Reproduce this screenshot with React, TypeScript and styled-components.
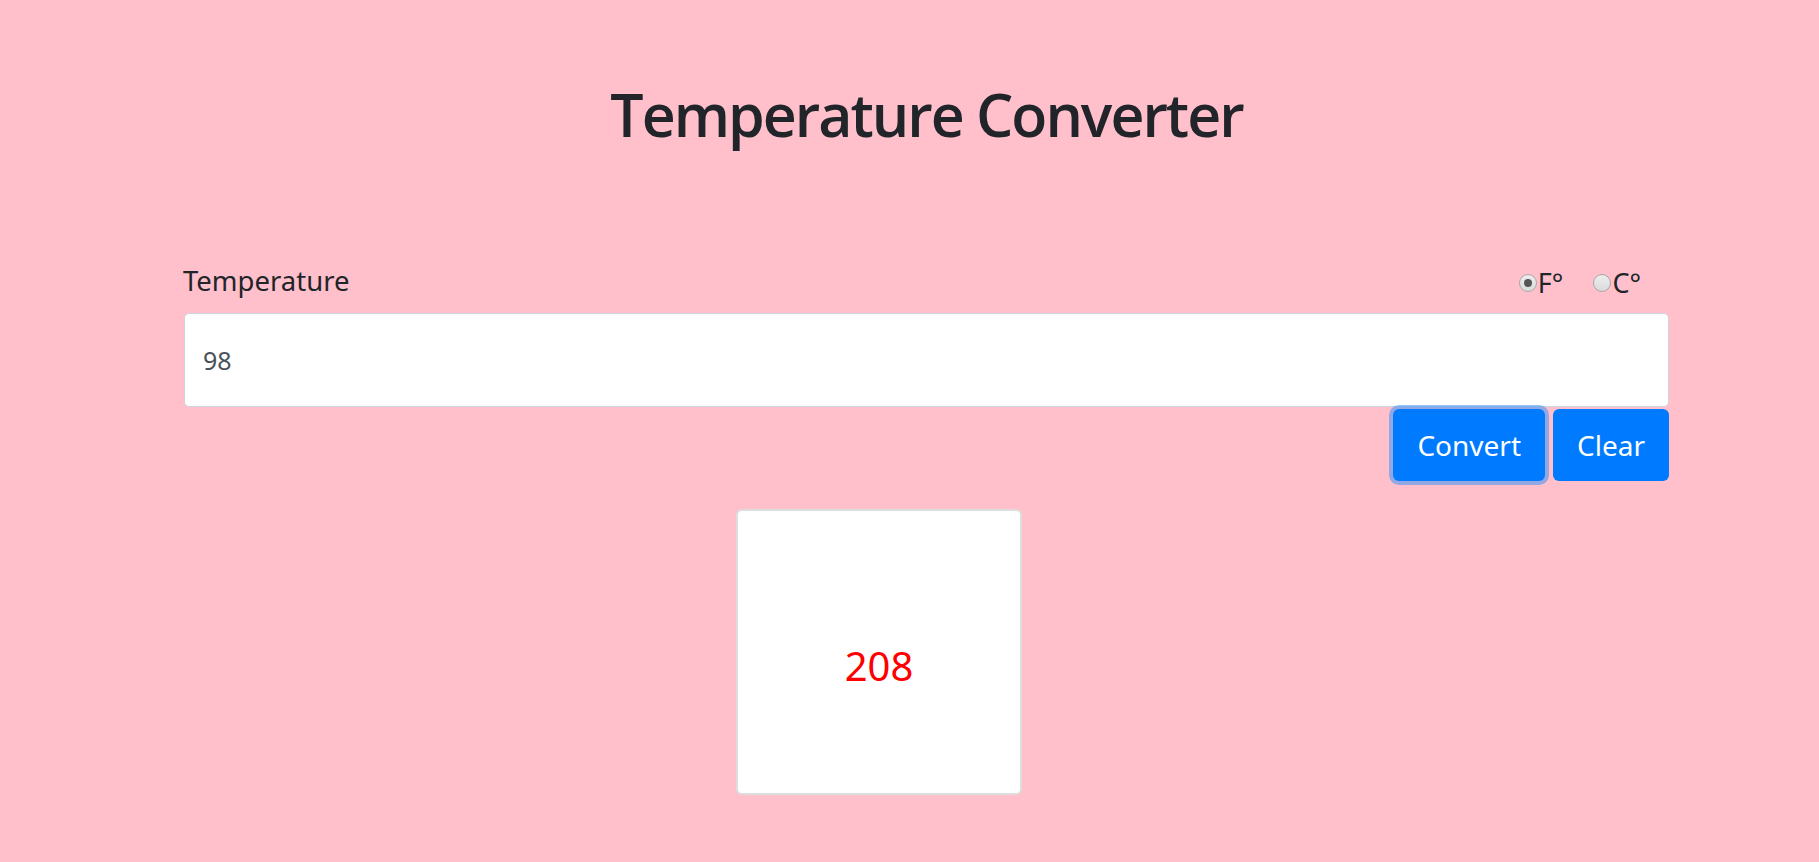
import { useState } from "react";
import styled, { createGlobalStyle } from "styled-components";

const GlobalStyle = createGlobalStyle`
  html, body {
    margin: 0;
    padding: 0;
    background: #ffc0cb;
  }
  body {
    font-family: "Noto Sans", "Open Sans", sans-serif;
    color: #212529;
  }
  * {
    box-sizing: border-box;
  }
`;

const convert = (value: string, unit: "F" | "C") => {
  const n = parseFloat(value);
  if (isNaN(n)) return "";
  return unit === "F" ? `${Math.round(n * 1.8 + 32)}` : `${Math.round((n - 32) / 1.8)}`;
};

export default function App() {
  const [value, setValue] = useState("98");
  const [unit, setUnit] = useState<"F" | "C">("F");
  const [result, setResult] = useState("208");

  return (
    <Page>
      <GlobalStyle />
      <Title>Temperature Converter</Title>
      <Form onSubmit={(e) => e.preventDefault()}>
        <FormHeader>
          <Label htmlFor="temp">Temperature</Label>
          <Units>
            <UnitOption>
              <Radio
                type="radio"
                name="unit"
                checked={unit === "F"}
                onChange={() => setUnit("F")}
              />
              F°
            </UnitOption>
            <UnitOption>
              <Radio
                type="radio"
                name="unit"
                checked={unit === "C"}
                onChange={() => setUnit("C")}
              />
              C°
            </UnitOption>
          </Units>
        </FormHeader>
        <Input
          id="temp"
          value={value}
          onChange={(e) => setValue(e.target.value)}
        />
        <Actions>
          <Button $focused onClick={() => setResult(convert(value, unit))}>
            Convert
          </Button>
          <Button
            onClick={() => {
              setValue("");
              setResult("");
            }}
          >
            Clear
          </Button>
        </Actions>
      </Form>
      <ResultCard>
        <ResultValue>{result}</ResultValue>
      </ResultCard>
    </Page>
  );
}

/* -------------------------------------------------------------------------- */
/*                                   STYLES                                   */
/* -------------------------------------------------------------------------- */

const Page = styled.div`
  min-height: 862px;
  padding: 0 150px 40px 184px;
`;

const Title = styled.h1`
  margin: 0;
  padding-top: 70px;
  text-align: center;
  font-family: "Open Sans", "Noto Sans", sans-serif;
  font-size: 59px;
  font-weight: 600;
  letter-spacing: -2px;
  line-height: 88px;
  color: #212529;
`;

const Form = styled.form`
  margin-top: 105px;
  display: flex;
  flex-direction: column;
`;

const FormHeader = styled.div`
  display: flex;
  justify-content: space-between;
  align-items: center;
  height: 40px;
  margin-bottom: 10px;
`;

const Label = styled.label`
  font-size: 27.5px;
  line-height: 40px;
  margin: 0 0 4px -1px;
`;

const Units = styled.div`
  display: flex;
  align-items: center;
  gap: 30px;
  padding-right: 28px;
`;

const UnitOption = styled.label`
  display: flex;
  align-items: center;
  font-size: 27px;
  line-height: 40px;
`;

const Radio = styled.input`
  appearance: none;
  width: 18px;
  height: 18px;
  margin: 0 1px 0 0;
  border-radius: 50%;
  border: 1px solid #a7a7a7;
  background: linear-gradient(#eeeeee, #dadada);
  position: relative;

  &:checked::after {
    content: "";
    position: absolute;
    left: 50%;
    top: 50%;
    width: 8px;
    height: 8px;
    margin: -4px 0 0 -4px;
    border-radius: 50%;
    background: #555;
  }
`;

const Input = styled.input`
  height: 94px;
  width: 100%;
  padding: 0 18px;
  border: 1px solid #ced4da;
  border-radius: 5px;
  background: #fff;
  font-family: inherit;
  font-size: 25px;
  color: #495057;
  outline: none;
`;

const Actions = styled.div`
  display: flex;
  justify-content: flex-end;
  gap: 8px;
  margin-top: 2px;
`;

const Button = styled.button<{ $focused?: boolean }>`
  height: 72px;
  padding: 0 24px;
  border: none;
  border-radius: 6px;
  background: #007bff;
  color: #fff;
  font-family: inherit;
  font-size: 28px;
  cursor: pointer;
  box-shadow: ${(p) =>
    p.$focused ? "0 0 0 4px rgba(38, 143, 255, 0.5)" : "none"};
`;

const ResultCard = styled.div`
  margin: 28px 0 0 552px;
  width: 286px;
  height: 286px;
  border: 2px solid #dddddd;
  border-radius: 6px;
  background: #fff;
  display: flex;
  align-items: center;
  justify-content: center;
`;

const ResultValue = styled.span`
  color: #ff0000;
  font-size: 40px;
  font-weight: 400;
  margin-top: 26px;
`;
